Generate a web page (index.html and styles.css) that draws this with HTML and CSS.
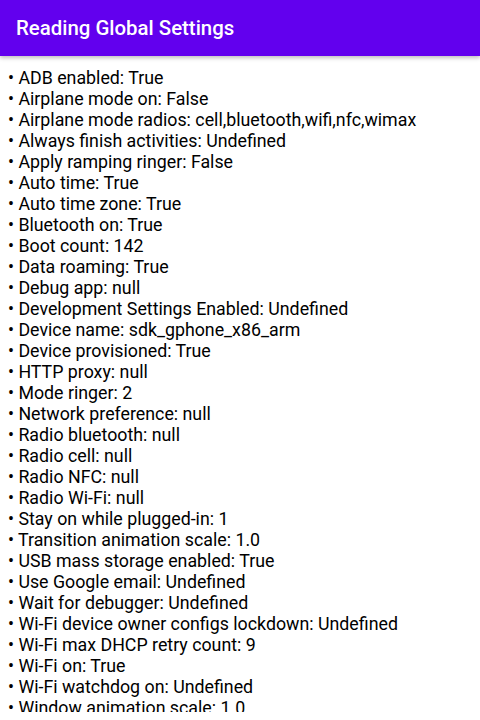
FILE: index.html
```html
<!DOCTYPE html>
<html>
<head>
<meta charset="utf-8">
<link rel="stylesheet" href="styles.css">
</head>
<body>
<header class="appbar"><span class="title">Reading Global Settings</span></header>
<main class="content">
<ul class="list">
<li>• ADB enabled: True</li>
<li>• Airplane mode on: False</li>
<li>• Airplane mode radios: cell,bluetooth,wifi,nfc,wimax</li>
<li>• Always finish activities: Undefined</li>
<li>• Apply ramping ringer: False</li>
<li>• Auto time: True</li>
<li>• Auto time zone: True</li>
<li>• Bluetooth on: True</li>
<li>• Boot count: 142</li>
<li>• Data roaming: True</li>
<li>• Debug app: null</li>
<li>• Development Settings Enabled: Undefined</li>
<li>• Device name: sdk_gphone_x86_arm</li>
<li>• Device provisioned: True</li>
<li>• HTTP proxy: null</li>
<li>• Mode ringer: 2</li>
<li>• Network preference: null</li>
<li>• Radio bluetooth: null</li>
<li>• Radio cell: null</li>
<li>• Radio NFC: null</li>
<li>• Radio Wi-Fi: null</li>
<li>• Stay on while plugged-in: 1</li>
<li>• Transition animation scale: 1.0</li>
<li>• USB mass storage enabled: True</li>
<li>• Use Google email: Undefined</li>
<li>• Wait for debugger: Undefined</li>
<li>• Wi-Fi device owner configs lockdown: Undefined</li>
<li>• Wi-Fi max DHCP retry count: 9</li>
<li>• Wi-Fi on: True</li>
<li>• Wi-Fi watchdog on: Undefined</li>
<li>• Window animation scale: 1.0</li>
</ul>
</main>
</body>
</html>
```
FILE: styles.css
```css
html, body {
  margin: 0;
  padding: 0;
  background: #ffffff;
  font-family: Roboto, "Noto Sans", sans-serif;
  overflow: hidden;
  height: 720px;
}
.appbar {
  height: 56px;
  background: #6200ee;
  display: flex;
  align-items: center;
  padding-left: 16px;
  box-shadow: 0 2px 4px rgba(0,0,0,0.25);
  position: relative;
  z-index: 1;
}
.title {
  color: #ffffff;
  font-size: 20.4px;
  font-weight: 500;
}
.content {
  height: 656px;
  overflow: hidden;
}
.list {
  list-style: none;
  margin: 0;
  padding: 11px 8px 0 8px;
}
.list li {
  font-size: 17.8px;
  line-height: 21px;
  color: #000000;
  white-space: nowrap;
}
```
